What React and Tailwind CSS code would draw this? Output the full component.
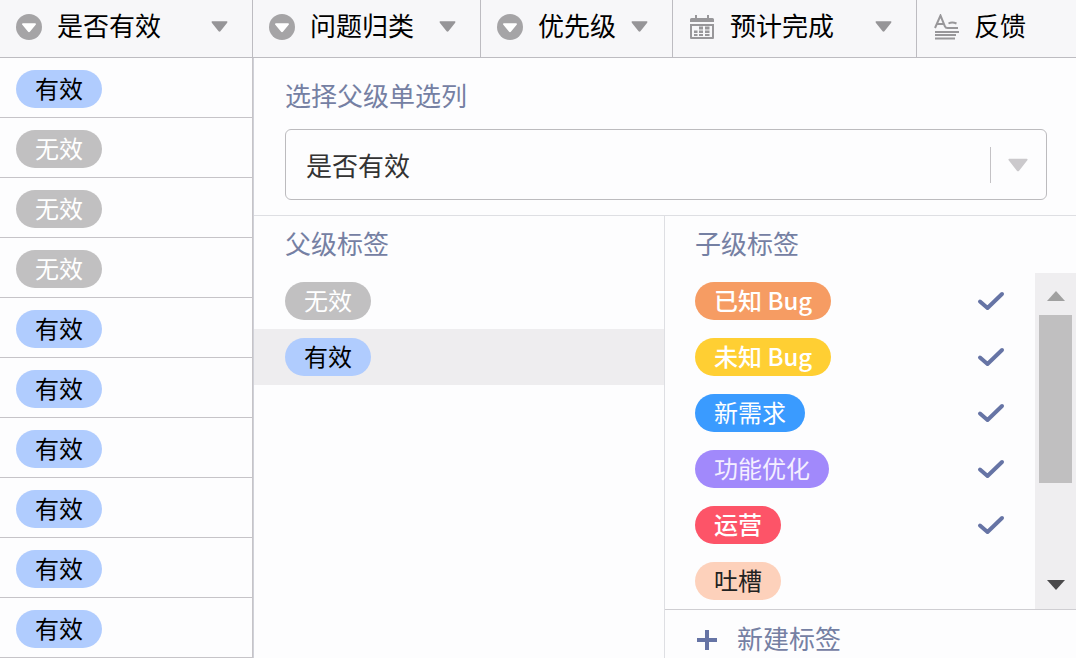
import React, { useState } from 'react';

const columns = [
  { title: '是否有效', icon: 'select', width: 'w-[253px]' },
  { title: '问题归类', icon: 'select', width: 'w-[228px]' },
  { title: '优先级', icon: 'select', width: 'w-[192px]' },
  { title: '预计完成', icon: 'date', width: 'w-[244px]' },
  { title: '反馈', icon: 'text', width: '' },
];

const rows = ['有效', '无效', '无效', '无效', '有效', '有效', '有效', '有效', '有效', '有效'];

const tagColors = {
  有效: 'bg-[#b0ccfe] text-black',
  无效: 'bg-[#c1c0c1] text-white',
  '已知 Bug': 'bg-[#f69c63] text-white font-medium',
  '未知 Bug': 'bg-[#ffcf33] text-white font-medium',
  新需求: 'bg-[#3a9bff] text-white',
  功能优化: 'bg-[#a189fb] text-[#f4efff]',
  运营: 'bg-[#fd5468] text-white font-medium',
  吐槽: 'bg-[#fdd1bb] text-[#222222]',
};

const childTags = ['已知 Bug', '未知 Bug', '新需求', '功能优化', '运营', '吐槽'];

const Tag = ({ name }) => (
  <span className={`inline-flex items-center h-[38px] px-[19px] pb-0.5 rounded-full text-[24px] leading-none whitespace-nowrap ${tagColors[name]}`}>
    {name}
  </span>
);

const Caret = ({ className }) => (
  <svg viewBox="0 0 18 12" className={className} fill="currentColor" aria-hidden="true">
    <path d="M1.2 0.4h15.6c.8 0 1.1.8.6 1.4L10 11.2c-.6.7-1.4.7-2 0L.6 1.8C.1 1.2.4.4 1.2.4z" />
  </svg>
);

const ColumnIcon = ({ type }) => {
  if (type === 'date') {
    return (
      <svg width="26" height="26" viewBox="0 0 26 26" fill="#98979a" aria-hidden="true">
        <path d="M6 1h2v3h10V1h2v3h3.500a1.500 1.500 0 0 1 1.500 1.500V8H1V5.500A1.500 1.500 0 0 1 2.500 4H6z" />
        <path fillRule="evenodd" d="M1 10h24v14a1 1 0 0 1-1 1H2a1 1 0 0 1-1-1zM3 12v11h20V12z" />
        <path d="M10 12.500h4v3h-4zM16 12.500h4.500v3H16zM5 16.500h3.500v2.500H5zM10 16.500h4v2.500h-4zM16 16.500h4.500v2.500H16zM5 20h3.500v2H5zM10 20h4v2h-4zM16 20h4.500v2H16z" />
      </svg>
    );
  }
  if (type === 'text') {
    return (
      <svg width="26" height="26" viewBox="0 0 26 26" fill="none" stroke="#98979a" strokeWidth="2" aria-hidden="true">
        <path d="M2 14L7.500 1.500L12 12.500Q12.500 14 14.500 14H25M4 10h7M15.500 9.500Q19 7.500 23.500 9.500" />
        <path d="M2 18h24M2 21h21M2 24.500h20" />
      </svg>
    );
  }
  return (
    <svg width="26" height="26" viewBox="0 0 26 26" aria-hidden="true">
      <circle cx="13" cy="13" r="13" fill="#a5a4a6" />
      <path d="M7 9.200h12c1 0 1.300.8.7 1.500l-5.600 6.900c-.7.800-1.500.8-2.200 0L6.300 10.700C5.700 10 6 9.200 7 9.200z" fill="#fff" />
    </svg>
  );
};

const CheckMark = () => (
  <svg width="28" height="20" viewBox="0 0 28 20" fill="none" className="hidden peer-checked:block" aria-hidden="true">
    <path d="M3 10.500L10.500 17L25 3" stroke="#6674a5" strokeWidth="4" strokeLinecap="round" strokeLinejoin="round" />
  </svg>
);

const LinkPanel = () => {
  const [parentColumn, setParentColumn] = useState('是否有效');
  const [activeParent, setActiveParent] = useState('有效');
  const [linked, setLinked] = useState(childTags.slice(0, 5));

  const toggle = (name) => {
    setLinked((prev) => (prev.includes(name) ? prev.filter((n) => n !== name) : [...prev, name]));
  };

  return (
    <div className="absolute left-[253px] right-0 top-[58px] bottom-0 flex flex-col overflow-hidden bg-[#fdfdfe] border-l border-[#d0d1d8]">
      {/* Parent column picker */}
      <div className="pt-[17px] pl-[31px] pr-[29px] pb-[15px] border-b border-[#dedfe3]">
        <label htmlFor="parent-column" className="block text-[26px] leading-[40px] text-[#7580a3]">
          选择父级单选列
        </label>
        <div className="relative mt-3.5">
          <select
            id="parent-column"
            value={parentColumn}
            onChange={(e) => setParentColumn(e.target.value)}
            className="appearance-none block w-full h-[71px] pl-5 pr-20 rounded-md border border-[#bcbbbe] bg-[#fdfdfe] text-[26px] text-[#333333]"
          >
            <option>是否有效</option>
            <option>优先级</option>
          </select>
          <div className="absolute inset-y-0 right-[19px] flex items-center gap-[17px] pointer-events-none text-[#cbc9cc]">
            <span className="w-px h-9 bg-[#c4c2c5]" />
            <Caret className="w-5 h-[14px]" />
          </div>
        </div>
      </div>

      <div className="flex-1 grid grid-cols-2">
        {/* Parent tags */}
        <section className="border-r border-[#dedfe3]">
          <h2 className="flex items-center h-[57px] pl-[31px] pb-1 text-[26px] text-[#7580a3]">父级标签</h2>
          {['无效', '有效'].map((name) => (
            <button
              key={name}
              type="button"
              aria-pressed={activeParent === name}
              onClick={() => setActiveParent(name)}
              className={`flex items-center w-full h-14 pl-[31px] ${activeParent === name ? 'bg-[#eeedef]' : ''}`}
            >
              <Tag name={name} />
            </button>
          ))}
        </section>

        {/* Child tags */}
        <section>
          <h2 className="flex items-center h-[57px] pl-[30px] pb-1 text-[26px] text-[#7580a3]">子级标签</h2>
          <div className="flex">
            <div className="flex-1">
              {childTags.map((name) => (
                <label key={name} className="relative flex items-center justify-between h-14 pl-[30px] pr-[30px] cursor-pointer">
                  <Tag name={name} />
                  <input
                    type="checkbox"
                    checked={linked.includes(name)}
                    onChange={() => toggle(name)}
                    className="peer sr-only"
                  />
                  <CheckMark />
                </label>
              ))}
            </div>
            <div className="flex flex-col w-[41px] bg-[#efeef0]">
              <button type="button" aria-label="向上滚动" className="flex items-center justify-center h-[42px] pt-1 text-[#a0a0a0]">
                <svg width="18" height="10" viewBox="0 0 18 10" fill="currentColor"><path d="M9 0l9 10H0z" /></svg>
              </button>
              <div className="h-[168px] mx-1 bg-[#c0bfc0]" />
              <div className="flex-1" />
              <button type="button" aria-label="向下滚动" className="flex items-center justify-center h-12 text-[#4a494b]">
                <svg width="18" height="10" viewBox="0 0 18 10" fill="currentColor"><path d="M9 10L0 0h18z" /></svg>
              </button>
            </div>
          </div>
          <button type="button" className="flex items-center gap-[19px] w-full h-[60px] pl-[31px] border-t border-[#cfced2] text-[26px] text-[#7580a3]">
            <svg width="22" height="22" viewBox="0 0 22 22" fill="none" stroke="#6674a5" strokeWidth="4" aria-hidden="true">
              <path d="M11 1v20M1 11h20" />
            </svg>
            <span className="pb-1">新建标签</span>
          </button>
        </section>
      </div>
    </div>
  );
};

export default function App() {
  return (
    <div className="relative min-h-screen overflow-hidden bg-[#fdfdfe] font-['Noto_Sans_CJK_SC',sans-serif]">
      <table className="w-full table-fixed border-separate border-spacing-0">
        <thead>
          <tr>
            {columns.map(({ title, icon, width }, i) => {
              const isLast = i === columns.length - 1;
              return (
                <th
                  key={title}
                  className={`h-[58px] p-0 font-normal bg-[#f7f7f9] border-b border-[#bdbcc1] ${width} ${isLast ? '' : 'border-r'}`}
                >
                  <div className="flex items-center gap-[15px] pl-4 pr-6 pb-1">
                    <ColumnIcon type={icon} />
                    <span className="pb-1 text-[26px] leading-[40px] text-black whitespace-nowrap">{title}</span>
                    {!isLast && (
                      <button type="button" aria-label={`${title}菜单`} className="ml-auto text-[#969598]">
                        <Caret className="w-[17px] h-[11px]" />
                      </button>
                    )}
                  </div>
                </th>
              );
            })}
          </tr>
        </thead>
        <tbody>
          {rows.map((value, i) => (
            <tr key={i}>
              <td className="h-[60px] pt-3 pl-4 pb-0 align-top leading-none border-b border-r border-[#c6c4c8]">
                <div className="flex">
                  <Tag name={value} />
                </div>
              </td>
              <td colSpan={4} className="p-0 border-b border-[#c6c4c8]" />
            </tr>
          ))}
        </tbody>
      </table>
      <LinkPanel />
    </div>
  );
}
